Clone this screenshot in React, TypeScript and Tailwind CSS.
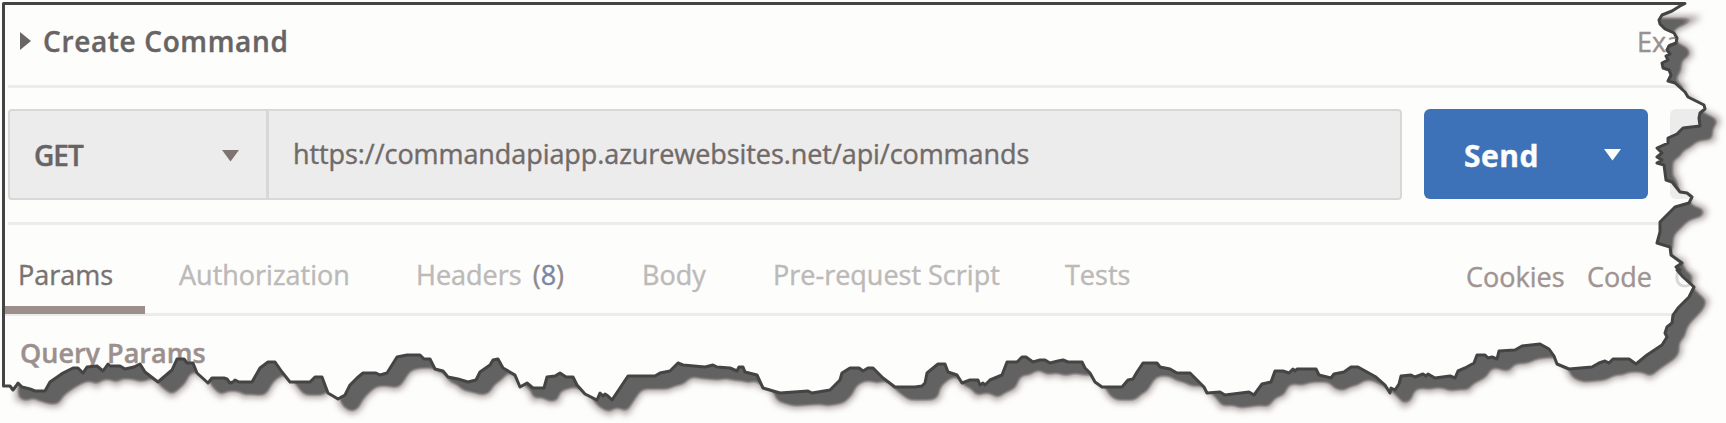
import type { ReactNode } from 'react';

const TORN_EDGE =
  'M3.5 3.5L1685 3.5L1680 6L1672 11L1662 15L1659 20L1660 24L1665 29L1674 33L1677 38L1676 43L1669 46L1667 50L1670 54L1666 56L1668 60L1662 63L1663 68L1669 70L1671 75L1668 81L1675 83L1685 92L1688 97L1704 105L1705 109L1700 113L1699 118L1700 126L1683 128L1677 134L1668 138L1668 143L1657 148L1662 153L1657 157L1662 160L1657 163L1664 165L1666 180L1672 182L1680 192L1687 193L1692 197L1689 203L1675 207L1662 220L1660 222L1660 232L1657 243L1670 247L1671 255L1682 263L1676 267L1680 270L1677 270L1683 277L1694 287L1689 297L1678 308L1673 315L1672 323L1667 327L1665 333L1667 337L1662 345L1647 355L1636 364L1629 359L1613 359L1609 363L1605 361L1599 363L1592 367L1569 369L1557 364L1554 356L1549 349L1540 344L1522 346L1515 350L1499 351L1497 359L1492 357L1488 358L1485 355L1477 355L1474 363L1465 368L1458 371L1455 378L1450 376L1435 378L1428 374L1426 376L1423 374L1415 377L1411 375L1401 376L1399 384L1395 390L1391 388L1390 393L1385 385L1376 377L1358 367L1351 367L1344 372L1334 374L1331 378L1319 375L1316 369L1297 369L1295 371L1293 369L1289 373L1283 371L1275 371L1271 382L1262 384L1254 395L1249 392L1225 395L1220 392L1207 393L1204 387L1197 380L1190 373L1177 373L1170 369L1160 367L1157 363L1143 363L1137 372L1133 379L1128 380L1122 387L1102 387L1095 382L1090 373L1085 368L1082 362L1068 362L1063 360L1058 361L1050 363L1045 360L1040 360L1033 362L1026 357L1022 357L1017 362L1007 362L1002 375L990 380L985 385L983 383L980 385L978 380L970 380L962 383L957 375L948 372L945 364L938 364L927 373L925 383L922 386L915 387L895 387L883 378L873 368L868 368L863 371L859 368L850 368L842 373L840 380L830 390L812 393L808 391L780 393L763 388L757 375L745 372L743 367L739 367L737 371L730 368L717 367L713 365L705 367L683 365L678 363L670 371L660 373L655 376L628 376L622 385L612 400L608 396L605 394L603 396L600 393L597 400L585 394L577 385L573 377L566 377L560 373L555 376L547 377L544 388L533 388L527 383L520 387L515 375L503 368L498 359L493 360L490 365L480 372L476 380L468 382L458 379L448 377L443 371L435 369L430 359L424 359L420 355L407 355L397 357L387 373L380 375L376 373L363 373L357 378L350 385L345 395L338 399L328 393L322 377L315 377L310 382L290 382L282 372L275 362L268 362L260 368L252 382L239 382L235 380L233 382L230 383L227 379L224 378L212 378L208 383L197 373L193 363L187 363L184 359L177 359L172 370L158 382L145 372L140 364L134 367L125 369L120 366L110 366L108 364L103 371L97 366L87 367L83 373L78 368L73 368L63 373L50 382L45 391L35 391L30 389L22 387L18 383L16 386L13 390L10 386L3.5 386Z';

const OUTSIDE = `M-20 -20H1760V460H-20Z${TORN_EDGE}`;

function TornPaper() {
  return (
    <svg className="pointer-events-none absolute inset-0" width="1726" height="423" viewBox="0 0 1726 423">
      <defs>
        <clipPath id="outside">
          <path d={OUTSIDE} clipRule="evenodd" />
        </clipPath>
        <filter id="halo" x="-5%" y="-10%" width="110%" height="120%" colorInterpolationFilters="sRGB">
          <feGaussianBlur stdDeviation="3.8" />
        </filter>
        <filter id="core" x="-5%" y="-10%" width="110%" height="120%" colorInterpolationFilters="sRGB">
          <feGaussianBlur stdDeviation="3.8" />
          <feComponentTransfer>
            <feFuncA type="linear" slope="3" intercept="-1.3" />
          </feComponentTransfer>
        </filter>
      </defs>
      <path d={OUTSIDE} fillRule="evenodd" fill="#fdfdfc" />
      <g clipPath="url(#outside)" strokeLinejoin="round">
        <path d={TORN_EDGE} transform="translate(14 14)" fill="#968b88" stroke="#968b88" strokeWidth="2" filter="url(#halo)" />
        <path d={TORN_EDGE} transform="translate(14 14)" fill="#636262" filter="url(#core)" />
      </g>
      <path d={TORN_EDGE} fill="none" stroke="#444444" strokeWidth="3" strokeLinejoin="round" />
    </svg>
  );
}

function Caret({ className }: { className: string }) {
  return (
    <svg className={className} width="17" height="12" viewBox="0 0 17 12" fill="currentColor">
      <path d="M0 0H17L8.5 11.5Z" />
    </svg>
  );
}

function Tab({ className, children }: { className: string; children: ReactNode }) {
  return <button className={`shrink-0 text-left whitespace-nowrap ${className}`}>{children}</button>;
}

export default function App() {
  return (
    <div className="relative h-[423px] w-[1726px] overflow-hidden bg-[#fdfdfc] font-['Open_Sans',sans-serif] text-[27px] leading-9 text-[#686464] [-webkit-text-stroke:0.4px]">
      <div className="flex h-full flex-col pl-2">
        <header className="flex h-[88px] shrink-0 items-start border-b-3 border-[#ececec] pt-[23px]">
          <svg className="mt-[9px] ml-3 shrink-0" width="11" height="18" viewBox="0 0 11 18" fill="#6a6666">
            <path d="M0 0L11 9L0 18Z" />
          </svg>
          <h1 className="ml-3 w-[1594px] shrink-0 text-[28px] font-semibold tracking-[0.65px]">Create Command</h1>
          <span className="pt-px text-[#9a908e]">Exa</span>
        </header>

        <section className="flex h-[137px] shrink-0 items-start border-b-3 border-[#ececec] pt-[21px]">
          <div className="flex h-[91px] w-[1394px] shrink-0 rounded-[4px] border-2 border-[#d8d8d8] bg-[#ececec]">
            <button className="flex w-[259px] shrink-0 items-start border-r-3 border-[#d8d8d8] pt-[26px] pl-6 text-[28px] font-semibold">
              <span className="w-[188px] text-left tracking-[-1px]">GET</span>
              <Caret className="mt-[13px] text-[#7d7472]" />
            </button>
            <span className="pt-[25px] pl-6 tracking-[-0.07px] text-[#706a68]">
              https://commandapiapp.azurewebsites.net/api/commands
            </span>
          </div>
          <button className="ml-[22px] flex h-[90px] w-[224px] shrink-0 items-start rounded-md bg-[#3e72b8] pt-[29px] pl-10 text-[30px] font-bold text-[#fdfdfc]">
            <span className="w-[140px] text-left tracking-[0.5px]">Send</span>
            <Caret className="mt-[11px]" />
          </button>
          <div className="ml-[22px] h-[90px] w-[50px] shrink-0 rounded-md bg-[#ececec]" />
        </section>

        <nav className="-ml-[3px] flex h-[91px] shrink-0 flex-col justify-end border-b-3 border-[#ececec]">
          <div className="flex h-[49px] items-start text-[#bcb9b8]">
            <Tab className="w-[174px] pl-[13px] text-[#787271]">Params</Tab>
            <Tab className="w-[237px]">Authorization</Tab>
            <Tab className="w-[226px]">
              Headers <span className="ml-1 text-[#92898c]">(<span className="text-[#7b86a2]">8</span>)</span>
            </Tab>
            <Tab className="w-[131px]">Body</Tab>
            <Tab className="w-[292px]">Pre-request Script</Tab>
            <Tab className="w-[401px]">Tests</Tab>
            <Tab className="w-[121px] pt-[2px] text-[#9f9491]">Cookies</Tab>
            <Tab className="w-[87px] pt-[2px] text-[#9f9491]">Code</Tab>
            <Tab className="pt-[2px] text-[#d8d8d8]">C</Tab>
          </div>
          <div className="-mb-px h-[8px] w-[140px] shrink-0 bg-[#9b8e8b]" />
        </nav>

        <h2 className="pt-[19px] pl-3 font-semibold text-[#9b908e]">Query Params</h2>
      </div>
      <TornPaper />
    </div>
  );
}
